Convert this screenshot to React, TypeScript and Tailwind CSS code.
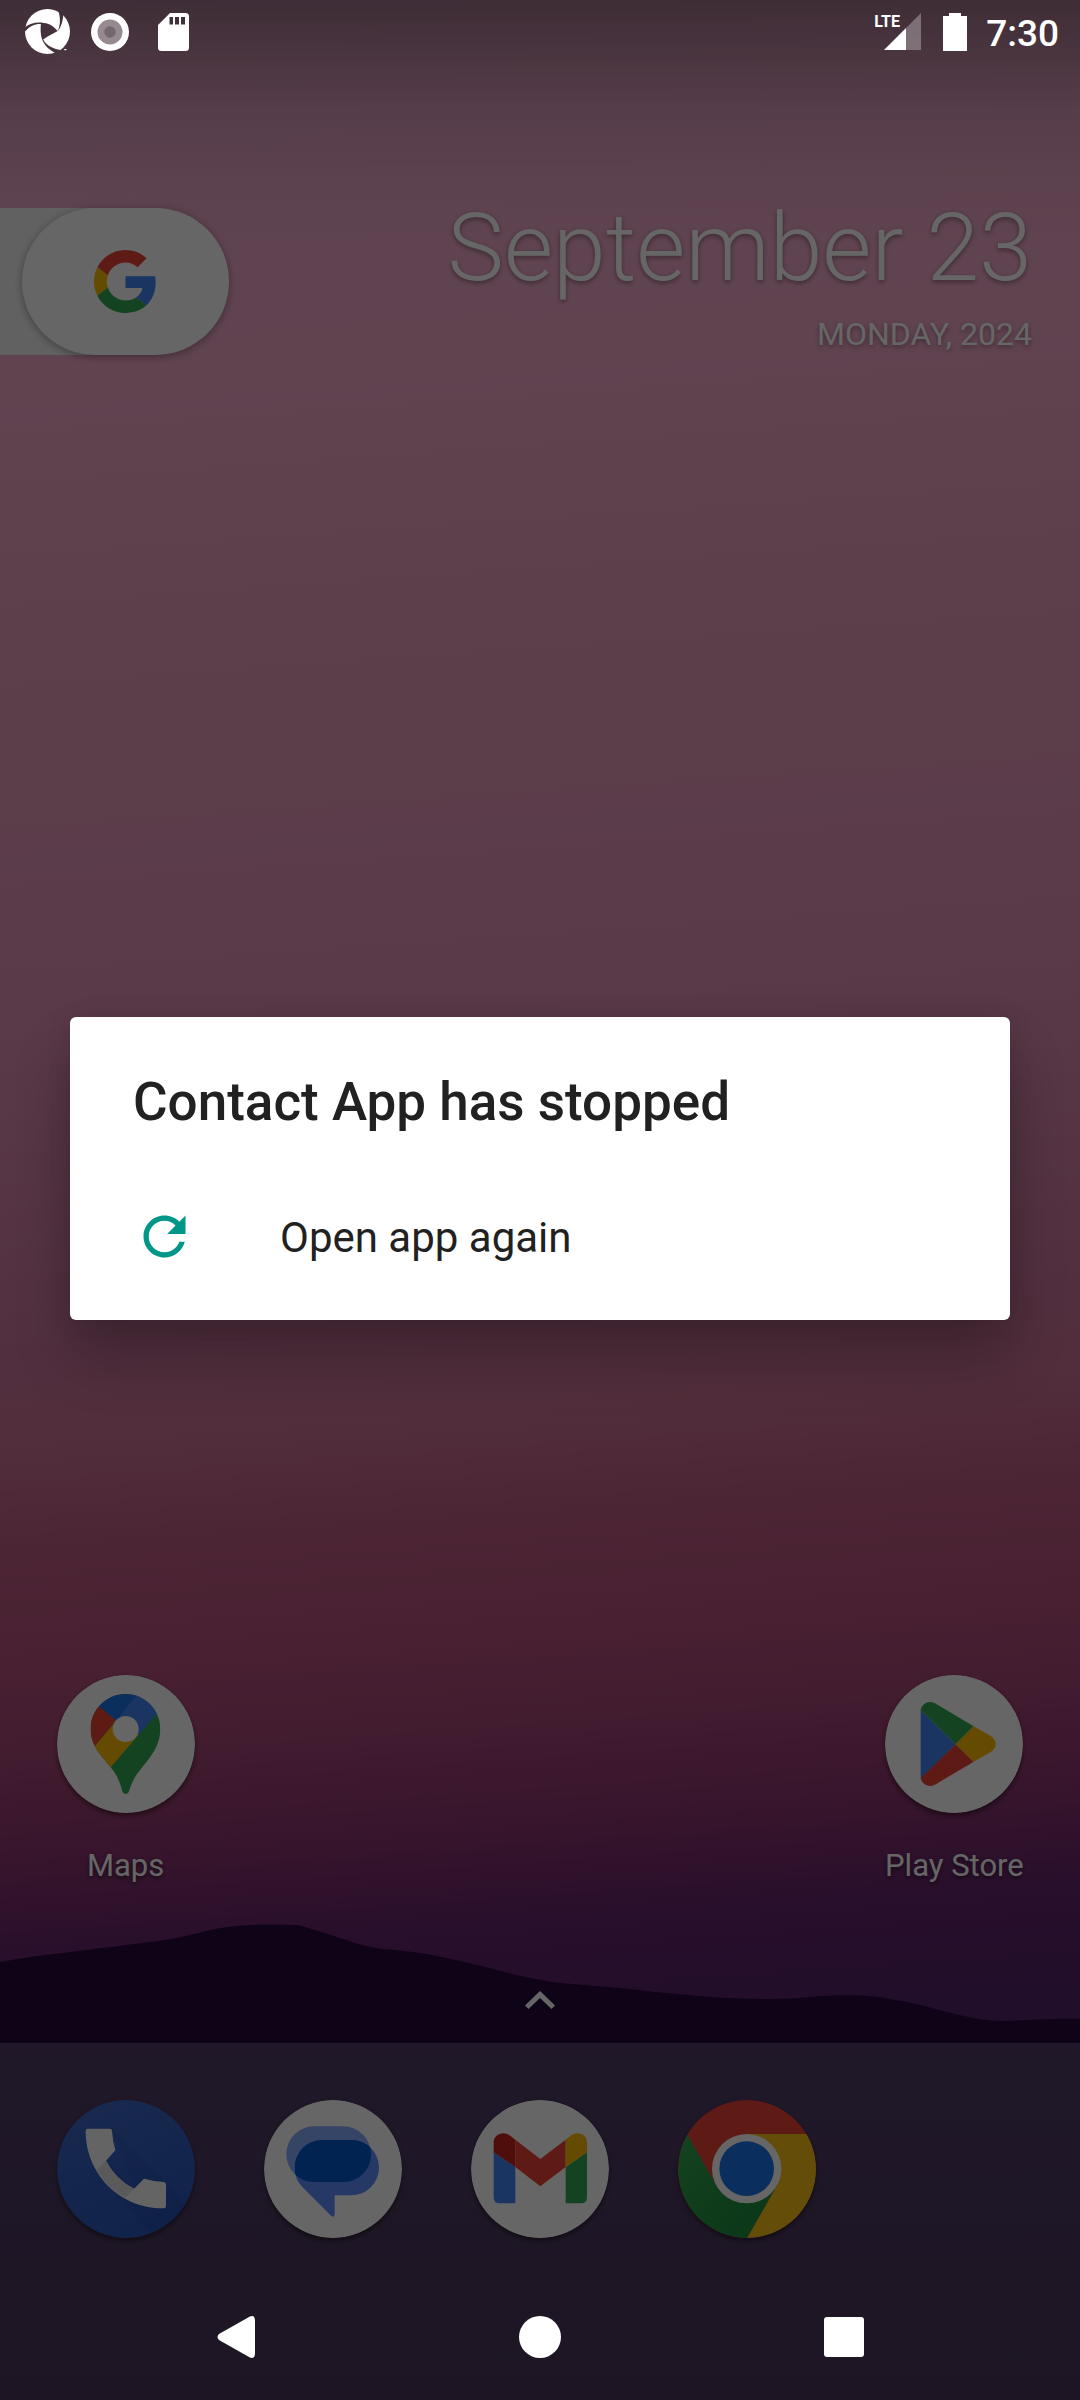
import type { ReactNode } from "react";

function StatusBar() {
  return (
    <header className="relative z-20 flex h-[63px] items-center justify-between pl-[25px] pr-[21px] text-white">
      <div className="flex items-center">
        <svg className="h-[45px] w-[45px]" viewBox="0 0 135 135" aria-label="Camera shutter">
          <mask id="blades">
            <circle cx="67.5" cy="67.5" r="67.5" fill="#fff" />
            <g fill="#000">
              <path d="M48 41C65 40 85 48 98 66C80 76 62 84 52 94C46 78 46 58 48 41Z" />
              <path d="M98 66C107 48 107 25 99 3L116 12C113 35 110 54 98 66Z" />
              <path d="M-2 57C10 45 30 39 52 41L48 45C30 44 14 50 -2 70Z" />
              <path d="M52 93C60 112 74 124 95 134L112 124C85 120 65 110 55 92Z" />
              <path d="M104 135L120 112L135 118V135Z" />
            </g>
          </mask>
          <rect width="135" height="135" fill="currentColor" mask="url(#blades)" />
          <path d="M117 120h8l-2 4h-4z" fill="currentColor" />
        </svg>
        <svg className="ml-[21px] h-[38px] w-[38px]" viewBox="0 0 38 38" aria-label="Recording">
          <circle cx="19" cy="19" r="19" fill="currentColor" />
          <circle cx="19" cy="19" r="12.5" fill="#96898f" />
          <circle cx="19" cy="19" r="5.7" fill="#74676d" />
        </svg>
        <svg className="ml-[29px] h-[38px] w-[31px]" viewBox="0 0 31 38" aria-label="SD card">
          <path
            fillRule="evenodd"
            fill="currentColor"
            d="M12 0h15.500a3.500 3.500 0 0 1 3.500 3.500v31a3.500 3.500 0 0 1-3.500 3.500h-24A3.500 3.500 0 0 1 0 34.500V12zM11.500 4v7.500h3.500V4zM17 4v7.500h4V4zM23 4v7.500h4V4z"
          />
        </svg>
      </div>
      <div className="flex items-center">
        <div className="relative mr-[22px] h-[37px] w-[37px]">
          <span className="absolute -left-[10px] top-0 text-[16px] font-bold leading-[18px]">LTE</span>
          <svg className="h-full w-full" viewBox="0 0 37 37" aria-label="Signal">
            <path d="M0 37L22 15V37Z" fill="currentColor" />
            <path d="M22 15L37 0V37H22Z" fill="currentColor" opacity="0.3" />
          </svg>
        </div>
        <svg className="mr-[19px] h-[38px] w-[24px]" viewBox="0 0 24 38" aria-label="Battery full">
          <path d="M6 0h12v3h6v35H0V3h6z" fill="currentColor" />
        </svg>
        <time className="pt-[4px] text-[37px] font-medium leading-[44px]">7:30</time>
      </div>
    </header>
  );
}

function GoogleG() {
  return (
    <svg className="h-[63px] w-[63px]" viewBox="0 0 48 48" aria-hidden="true">
      <path fill="#ea4335" d="M24 9.500c3.540 0 6.710 1.220 9.210 3.600l6.850-6.850C35.900 2.380 30.470 0 24 0 14.620 0 6.510 5.380 2.560 13.220l7.980 6.190C12.430 13.720 17.740 9.500 24 9.500z" />
      <path fill="#4285f4" d="M46.980 24.550c0-1.570-.15-3.090-.38-4.550H24v9.020h12.940c-.58 2.960-2.260 5.480-4.780 7.180l7.730 6c4.510-4.180 7.090-10.360 7.090-17.650z" />
      <path fill="#fbbc05" d="M10.530 28.590c-.48-1.450-.76-2.990-.76-4.590s.27-3.140.76-4.590l-7.980-6.190C.92 16.460 0 20.120 0 24c0 3.880.92 7.540 2.560 10.780l7.970-6.190z" />
      <path fill="#34a853" d="M24 48c6.480 0 11.930-2.130 15.890-5.810l-7.730-6c-2.150 1.450-4.920 2.300-8.160 2.300-6.260 0-11.570-4.220-13.470-9.910l-7.980 6.190C6.510 42.620 14.620 48 24 48z" />
    </svg>
  );
}

function MapsIcon() {
  return (
    <>
      <clipPath id="pin">
        <path d="M206 57C263 57 310 104 310 161C310 222 268 258 238 300C226 320 220 335 216 349C212 360 200 360 196 349C188 318 178 298 161 277C135 242 101 215 101 161C101 104 148 57 206 57Z" />
      </clipPath>
      <circle cx="207" cy="207" r="207" fill="#fff" />
      <g clipPath="url(#pin)">
        <path d="M60 30H350V380H60Z" fill="#34a853" />
        <path d="M60 275L170 146L206 162L246 178L161 277L140 302Z" fill="#fbbc04" />
        <path d="M128 95L176 135L168 148L60 275V60Z" fill="#ea4335" />
        <path d="M112 82L176 135L206 162L190 124L250 48L150 30Z" fill="#1a73e8" />
        <path d="M246 52L188 122L206 162L246 178L330 80L300 40Z" fill="#4285f4" />
      </g>
      <circle cx="206" cy="162" r="39" fill="#fff" />
    </>
  );
}

function PlayIcon() {
  return (
    <>
      <circle cx="207" cy="207" r="207" fill="#fff" />
      <path d="M107 105L212 208L107 311Z" fill="#4285f4" />
      <path d="M107 105C112 84 132 76 150 85L266 154L212 208Z" fill="#34a853" />
      <path d="M107 309C112 330 132 338 150 329L266 260L212 208Z" fill="#ea4335" />
      <path d="M266 154L317 183C337 195 337 220 317 231L266 260L212 208Z" fill="#fbbc04" />
    </>
  );
}

function PhoneIcon() {
  return (
    <>
      <linearGradient id="phoneBg" x1="0" y1="0" x2="0.4" y2="1">
        <stop offset="0" stopColor="#4069c8" />
        <stop offset="1" stopColor="#2c57bc" />
      </linearGradient>
      <clipPath id="phoneDisc">
        <circle cx="207" cy="207" r="207" />
      </clipPath>
      <circle cx="207" cy="207" r="207" fill="url(#phoneBg)" />
      <path
        clipPath="url(#phoneDisc)"
        d="M164 88L414 338V414H290L112 210L147 182L231 266Z"
        fill="#1b3f9c"
        opacity="0.14"
      />
      <path
        d="M86 93Q86 86 93 86H158Q164 86 165 92Q167 125 175 151L147 182Q176 238 231 266L261 236Q290 244 320 246Q327 247 327 253V318Q327 325 320 325C180 325 86 215 86 93Z"
        fill="#fbfbfb"
      />
      <path d="M118 209L147 182Q176 238 231 266L205 294Q150 262 118 209Z" fill="#e2e2e2" />
    </>
  );
}

function MessagesIcon() {
  const front =
    "M92 203A83 83 0 0 1 175 120H262A83 83 0 0 1 262 286H212V344Q210 354 202 348L116 262Q92 238 92 203Z";
  return (
    <>
      <clipPath id="frontBubble">
        <path d={front} />
      </clipPath>
      <circle cx="207" cy="207" r="207" fill="#fff" />
      <rect x="67" y="79" width="254" height="167" rx="83" fill="#87acff" />
      <path d={front} fill="#5f8cff" />
      <rect x="67" y="79" width="254" height="167" rx="83" fill="#0057cc" clipPath="url(#frontBubble)" />
    </>
  );
}

function GmailIcon() {
  return (
    <>
      <circle cx="207" cy="207" r="207" fill="#fff" />
      <path d="M68 157L133 201V310H86Q68 310 68 292Z" fill="#4285f4" />
      <path d="M348 157L284 201V310H330Q348 310 348 292Z" fill="#34a853" />
      <path d="M133 119L208 177L284 119V201L208 259L133 201Z" fill="#ea4335" />
      <path d="M68 157V128C68 112 80 100 98 100C112 100 120 110 133 119V201Z" fill="#c5221f" />
      <path d="M348 157V128C348 112 336 100 319 100C305 100 297 110 284 119V201Z" fill="#fbbc04" />
    </>
  );
}

function ChromeIcon() {
  return (
    <>
      <linearGradient id="chromeGreen" x1="0" y1="0" x2="0.8" y2="0.8">
        <stop offset="0" stopColor="#34a853" />
        <stop offset="1" stopColor="#1e8e3e" />
      </linearGradient>
      <circle cx="207" cy="207" r="207" fill="#ea4335" />
      <path d="M206 102H386A207 207 0 0 1 207 414L296 258Z" fill="#fbc116" />
      <path d="M28 104L116 258L206 300L296 258L207 414A207 207 0 0 1 28 104Z" fill="url(#chromeGreen)" />
      <circle cx="206" cy="206" r="104" fill="#fff" />
      <circle cx="206" cy="206" r="82" fill="#1a73e8" />
    </>
  );
}

function AppButton({ name, showLabel, children }: { name: string; showLabel?: boolean; children: ReactNode }) {
  return (
    <button type="button" aria-label={name} className="flex flex-col items-center">
      <svg className="h-[138px] w-[138px] rounded-full shadow-[0_3px_5px_rgba(0,0,0,0.45)]" viewBox="0 0 414 414" aria-hidden="true">
        {children}
      </svg>
      {showLabel && (
        <span className="mt-[34px] whitespace-nowrap text-[31px] leading-[38px] text-white [text-shadow:0_2px_4px_rgba(0,0,0,0.6)]">
          {name}
        </span>
      )}
    </button>
  );
}

function CrashDialog() {
  return (
    <div className="absolute inset-0 z-10 flex items-center bg-black/60 px-[70px] pb-[126px] pt-[63px]">
      <section
        role="dialog"
        aria-labelledby="crash-title"
        className="w-full rounded-[6px] bg-white pb-[21px] pt-[55px] text-[#212121] shadow-[0_38px_56px_rgba(0,0,0,0.24),0_0_24px_rgba(0,0,0,0.1)]"
      >
        <h1 id="crash-title" className="px-[63px] text-[53px] font-medium leading-[60px]">
          Contact App has stopped
        </h1>
        <button type="button" className="mt-[41px] flex h-[126px] w-full items-center px-[63px] text-left text-[42px] leading-[48px]">
          <svg className="mr-[84px] h-[63px] w-[63px]" viewBox="0 0 24 24" aria-hidden="true">
            <path
              fill="#009688"
              d="M17.650 6.350C16.200 4.900 14.210 4 12 4c-4.420 0-7.990 3.580-7.990 8s3.570 8 7.990 8c3.730 0 6.840-2.550 7.730-6h-2.080c-.82 2.330-3.040 4-5.650 4-3.310 0-6-2.690-6-6s2.690-6 6-6c1.660 0 3.140.69 4.220 1.780L13 11h7V4l-2.350 2.350z"
            />
          </svg>
          <span className="pt-[3px]">Open app again</span>
        </button>
      </section>
    </div>
  );
}

export default function App() {
  return (
    <main className="relative flex min-h-screen flex-col overflow-hidden bg-[linear-gradient(180deg,rgba(0,0,0,0.34)_0%,rgba(0,0,0,0.21)_2.5%,rgba(0,0,0,0.1)_4.6%,rgba(0,0,0,0.04)_7.5%,transparent_11%),linear-gradient(176deg,#ecacce_0%,#f2a8c8_16%,#e89ebc_26%,#e191b6_41%,#cd78a0_54%,#cd7396_58%,#be5c84_63%,#b6527d_67%,#a84878_70.5%,#943a70_74%,#7a2d6e_77%,#66266c_79%,#502369_84%)] font-[Roboto,sans-serif]">
      <StatusBar />

      <div className="flex items-start justify-between pr-[48px] pt-[129px]">
        <div className="mt-[16px] flex h-[147px] w-[229px] bg-linear-to-r from-[#f3f3f3] from-50% to-transparent to-50% pl-[22px]">
          <button
            type="button"
            aria-label="Google search"
            className="flex w-[207px] items-center justify-center rounded-full bg-white shadow-[0_2px_8px_rgba(0,0,0,0.35)]"
          >
            <GoogleG />
          </button>
        </div>
        <div className="text-right text-white [text-shadow:0_2px_5px_rgba(0,0,0,0.4)]">
          <p className="text-[95px] font-light leading-[112px]">September 23</p>
          <p className="mt-[11px] text-[32px] leading-[38px]">MONDAY, 2024</p>
        </div>
      </div>

      <div className="flex-1" />

      <div className="relative">
        <svg
          className="absolute bottom-0 left-0 h-[123px] w-full"
          viewBox="0 1920 1080 123"
          preserveAspectRatio="none"
          aria-hidden="true"
        >
          <path
            fill="#27093e"
            d="M0 1962C22 1958 42 1955 62 1953C100 1948 135 1944 165 1940C190 1936 205 1930 227 1927C250 1924 275 1924 298 1925C310 1928 320 1932 331 1935C350 1941 362 1946 382 1949C400 1950 412 1952 427 1954C448 1958 464 1962 482 1966C502 1971 518 1976 537 1979C550 1982 560 1983 572 1984L620 1988C645 1991 665 1993 689 1995C720 1998 745 1999 771 1999C800 1999 820 1995 847 1995C872 1995 882 1998 902 2001C925 2005 942 2012 964 2016C980 2020 992 2021 1006 2021C1030 2020 1055 2018 1080 2019V2043H0Z"
          />
        </svg>
        <div className="relative">
          <div className="grid grid-cols-5 px-[22px]">
            <AppButton name="Maps" showLabel>
              <MapsIcon />
            </AppButton>
            <div className="col-span-3" />
            <AppButton name="Play Store" showLabel>
              <PlayIcon />
            </AppButton>
          </div>
          <button type="button" aria-label="All apps" className="mx-auto mt-[106px] block pb-[34px]">
            <svg className="h-[18px] w-[30px]" viewBox="0 0 30 18" aria-hidden="true">
              <path d="M15 0L30 14.500L26.500 18L15 7L3.500 18L0 14.500Z" fill="#fff" />
            </svg>
          </button>
        </div>
      </div>

      <footer className="bg-[linear-gradient(180deg,#503d66,#4a3659)] pt-[57px]">
        <div className="grid grid-cols-5 px-[22px] pb-[36px]">
          <AppButton name="Phone">
            <PhoneIcon />
          </AppButton>
          <AppButton name="Messages">
            <MessagesIcon />
          </AppButton>
          <AppButton name="Gmail">
            <GmailIcon />
          </AppButton>
          <AppButton name="Chrome">
            <ChromeIcon />
          </AppButton>
        </div>
        <nav className="relative z-20 mx-auto grid h-[126px] w-full max-w-[912px] grid-cols-3 place-items-center">
          <button type="button" aria-label="Back">
            <svg className="h-[42px] w-[38px]" viewBox="0 0 38 42" aria-hidden="true">
              <path d="M32 1Q38 -2 38 5V37Q38 44 32 41L2 24Q-1 21 2 18Z" fill="#fff" />
            </svg>
          </button>
          <button type="button" aria-label="Home" className="h-[42px] w-[42px] rounded-full bg-white" />
          <button type="button" aria-label="Recent apps" className="h-[40px] w-[40px] rounded-[3px] bg-white" />
        </nav>
      </footer>

      <CrashDialog />
    </main>
  );
}
